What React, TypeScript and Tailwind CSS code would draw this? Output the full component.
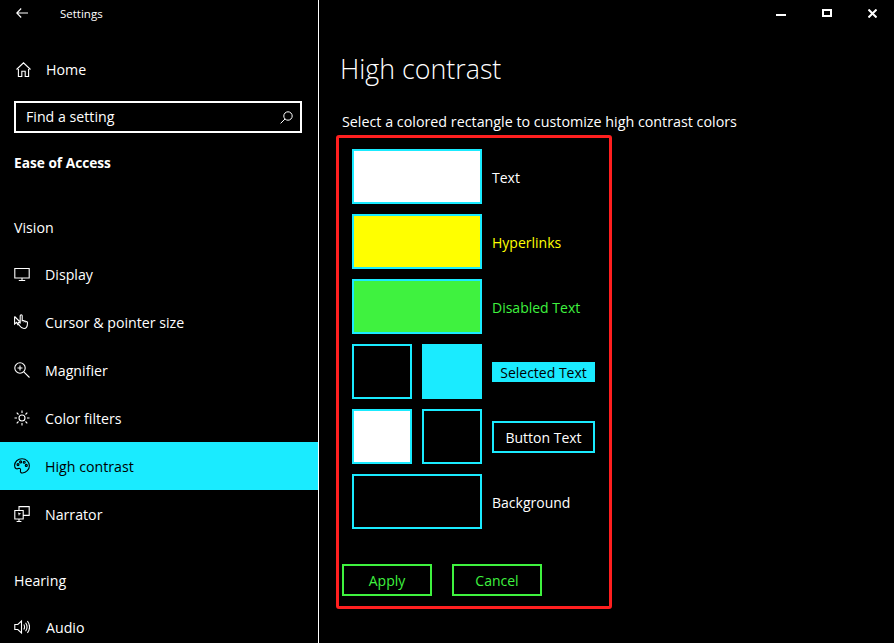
import React from "react";

const C = { fill: "none", stroke: "currentColor", strokeWidth: 1.1 };

function Icon({ children }: { children: React.ReactNode }) {
  return (
    <svg width="16" height="16" viewBox="0 0 16 16" className="shrink-0" {...C}>
      {children}
    </svg>
  );
}

const icons: Record<string, React.ReactNode> = {
  display: <Icon><path d="M0.8 2.5h14.4v9.5H0.8zM8 12v2.5M4.8 14.5h6.4" /></Icon>,
  cursor: <Icon><path d="M0.6 2.5v7.5l2-1.6 1.6 2.8M0.6 2.5l5 5M6.2 9V1.8a1 1 0 0 1 2 0v5l1-.3c.8-.2 1 .3 1 .8.5-.5 1.6-.4 1.7.5.6-.4 1.6-.2 1.6.9 0 2.8-.8 5.8-3.5 5.8-2.2 0-3.2-1-4.5-3l-1.3-2c-.5-.9.6-1.6 1.3-.8z" /></Icon>,
  magnifier: <Icon><circle cx="6" cy="6" r="5.2" /><path d="M9.8 9.8 15.5 15.5M3.5 6h5M6 3.5v5" /></Icon>,
  sun: <Icon><circle cx="8" cy="8" r="3" /><path d="M8 .5v2.5M8 13v2.5M.5 8H3M13 8h2.5M2.7 2.7l1.8 1.8M11.5 11.5l1.8 1.8M13.3 2.7l-1.8 1.8M4.5 11.5l-1.8 1.8" /></Icon>,
  palette: <Icon><path d="M8 .8C3.8.8.6 3.8.6 7.6c0 3.2 2.2 3.6 3.6 3 1.6-.6 2.8.2 2.3 1.8-.5 1.6.5 2.8 2 2.6 3.6-.4 6.9-3.4 6.9-7.2C15.4 3.8 12.2.8 8 .8z" /><circle cx="4" cy="6.6" r="1" /><circle cx="6.6" cy="3.9" r="1" /><circle cx="10.2" cy="4.2" r="1" /><circle cx="12.3" cy="7.4" r="1" /></Icon>,
  narrator: <Icon><path d="M5 4.5V.6h10.2v8.8H9.2M.8 4.5h8.4v8.5H.8zM5 13v2.5M2.6 15.5h4.8" /><path d="M4 6.5l3.2 1.3-1.8.6-.4 1.8z" fill="currentColor" stroke="none" /></Icon>,
  audio: <Icon><path d="M.8 5.5h3L7.5 2v12L3.8 10.5h-3zM9.8 5.5c1 1.6 1 3.4 0 5M11.6 3.8c1.8 2.6 1.8 5.8 0 8.4M13.4 2c2.6 3.6 2.6 8.4 0 12" /></Icon>,
};

function NavRow({ icon, label, active, gap }: { icon: string; label: string; active?: boolean; gap?: string }) {
  return (
    <div className={`flex h-12 items-center pl-[14px] ${active ? "bg-[#1aebff] text-black" : "text-white"}`}>
      {icons[icon]}
      <span className={`${gap ?? "ml-[15px]"} mt-[2px] text-[14.2px] leading-5`}>{label}</span>
    </div>
  );
}

function Swatch({ className }: { className: string }) {
  return <div className={`h-[55px] border-2 border-[#1aebff] ${className}`} />;
}

function Row({ children, label }: { children: React.ReactNode; label: React.ReactNode }) {
  return (
    <div className="flex h-[55px] items-center gap-[10px]">
      <div className="flex w-[130px] gap-[10px]">{children}</div>
      <div className="text-[14px]">{label}</div>
    </div>
  );
}

export default function App() {
  return (
    <div className="flex h-[643px] w-[894px] overflow-hidden bg-black text-white font-['Open_Sans','Noto_Sans',sans-serif]">
      <aside className="w-[319px] shrink-0 border-r border-white">
        <div className="flex h-[28px] items-center">
          <svg width="12" height="10" viewBox="0 0 12 10" className="mb-[2px] ml-[16px]" fill="none" stroke="currentColor" strokeWidth="1.1">
            <path d="M12 5H.8M5.2.5.8 5l4.4 4.5" />
          </svg>
          <span className="ml-[32px] text-[11.5px]">Settings</span>
        </div>
        <div className="mt-[17px] flex h-12 items-center pl-[16px]">
          <svg width="15" height="15" viewBox="0 0 15 15" className="shrink-0" {...C}>
            <path d="M.5 7.5 7.5.8l7 6.7M2.4 5.8v8.7h3.4V9.3h3.4v5.2h3.4V5.8" />
          </svg>
          <span className="ml-[15px] mt-[2px] text-[14.2px]">Home</span>
        </div>
        <div className="mx-[14px] mt-[8px] flex h-8 w-[288px] items-center justify-between border-2 border-white pl-[10px] pr-[7px]">
          <span className="text-[14.2px] leading-5">Find a setting</span>
          <svg width="13" height="13" viewBox="0 0 13 13" fill="none" stroke="currentColor" strokeWidth="1">
            <circle cx="8" cy="5" r="4.2" />
            <path d="M5 8 .6 12.4" />
          </svg>
        </div>
        <div className="mt-5 pl-[14px] text-[13.7px] font-bold leading-5">Ease of Access</div>
        <div className="mt-[45px] pl-[14px] text-[14.2px] leading-5">Vision</div>
        <div className="mt-3">
          <NavRow icon="display" label="Display" />
          <NavRow icon="cursor" label="Cursor & pointer size" />
          <NavRow icon="magnifier" label="Magnifier" />
          <NavRow icon="sun" label="Color filters" />
          <NavRow icon="palette" label="High contrast" active />
          <NavRow icon="narrator" label="Narrator" />
        </div>
        <div className="mt-[33px] pl-[14px] text-[14.2px] leading-5">Hearing</div>
        <div className="mt-3">
          <NavRow icon="audio" label="Audio" gap="ml-[16px]" />
        </div>
      </aside>

      <main className="relative flex-1 pl-[17px]">
        <div className="absolute right-0 top-0 flex h-[28px] items-center">
          <div className="mr-[36px] mt-[2px] h-[2px] w-[10px] bg-white" />
          <div className="mb-[2px] mr-[36px] h-[8px] w-[10px] border-2 border-white" />
          <svg width="9" height="9" viewBox="0 0 9 9" className="mb-px mr-[17px]" stroke="white" strokeWidth="2">
            <path d="M.5.5l8 8M8.5.5l-8 8" />
          </svg>
        </div>
        <h1 className="ml-[4px] mt-[49px] text-[26.8px] font-light leading-10">High contrast</h1>
        <p className="ml-[6px] mt-[23px] text-[14.3px] leading-5">Select a colored rectangle to customize high contrast colors</p>
        <div className="mt-[3px] w-[276px] rounded-[3px] border-[3px] border-[#ff1f1f] pb-[10px] pl-[3px] pr-[14px] pt-[11px]">
          <div className="ml-[10px] flex flex-col gap-[10px]">
            <Row label={<span className="block pt-[2px]">Text</span>}>
              <Swatch className="w-full bg-white" />
            </Row>
            <Row label={<span className="block pt-[2px] text-[#ffff00]">Hyperlinks</span>}>
              <Swatch className="w-full bg-[#ffff00]" />
            </Row>
            <Row label={<span className="block pt-[2px] text-[#3ff23f]">Disabled Text</span>}>
              <Swatch className="w-full bg-[#3ff23f]" />
            </Row>
            <Row label={<span className="flex h-5 w-[103px] items-center justify-center bg-[#1aebff] pt-[2px] text-black">Selected Text</span>}>
              <Swatch className="w-[60px] bg-black" />
              <Swatch className="w-[60px] bg-[#1aebff]" />
            </Row>
            <Row label={<span className="flex h-8 w-[103px] items-center justify-center border-2 border-[#1aebff] pt-[2px]">Button Text</span>}>
              <Swatch className="w-[60px] bg-white" />
              <Swatch className="w-[60px] bg-black" />
            </Row>
            <Row label={<span className="block pt-[2px]">Background</span>}>
              <Swatch className="w-full bg-black" />
            </Row>
          </div>
          <div className="mt-[35px] flex gap-5">
            <div className="flex h-8 w-[90px] items-center justify-center border-2 border-[#3ff23f] text-[14px] text-[#3ff23f]"><span className="leading-[21px]">Apply</span></div>
            <div className="flex h-8 w-[90px] items-center justify-center border-2 border-[#3ff23f] text-[14px] text-[#3ff23f]"><span className="leading-[21px]">Cancel</span></div>
          </div>
        </div>
      </main>
    </div>
  );
}
